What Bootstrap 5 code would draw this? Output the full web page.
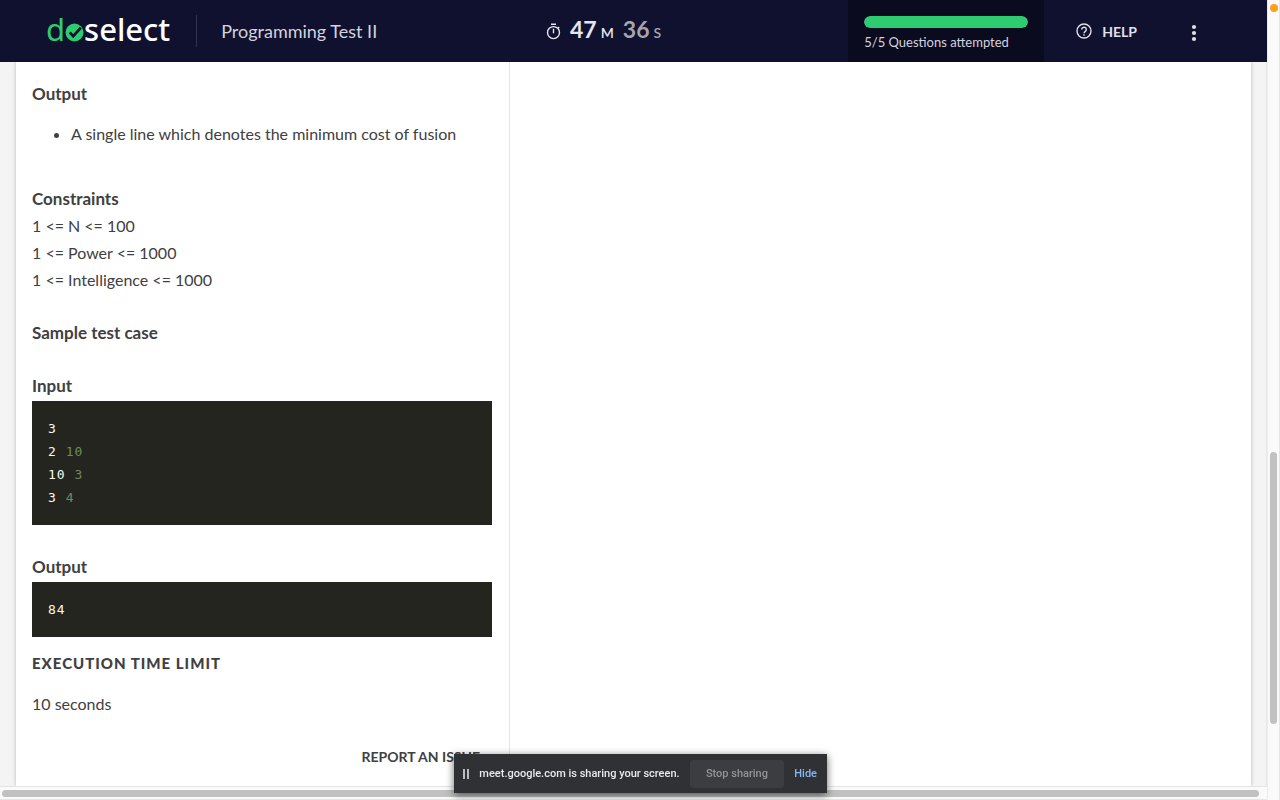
<!DOCTYPE html>
<html lang="en">
<head>
<meta charset="utf-8">
<meta name="viewport" content="width=device-width, initial-scale=1">
<title>Programming Test II</title>
<link href="https://cdn.jsdelivr.net/npm/bootstrap@5.3.0/dist/css/bootstrap.min.css" rel="stylesheet">
<style>
body { font-family: Lato, sans-serif; font-size: 16px; line-height: 27px; color: #404042; background: #fafafa; }
.topbar { background: #10102f; height: 62px; color: #d3d3df; }
.brand { color: #fff; font-family: "Noto Sans", sans-serif; font-size: 31px; line-height: 32px; font-weight: 500; margin: 0 0 4px 46px; }
.brand-d { color: #2ecc71; font-weight: 400; }
.brand-o { width: 19px; height: 19px; margin-top: 7px; }
.divider { width: 1px; height: 32px; background: #31314d; margin: 0 24px 0 26px; }
.test-name { font-size: 18px; }
.side-start { flex: 547 1 0; min-width: 0; }
.side-end { flex: 607 1 0; min-width: 0; }
.timer { color: #e6e6ee; gap: 9px; }
.timer-value { gap: 4px; }
.timer-min, .timer-sec { font-size: 23px; font-weight: 700; }
.timer-unit { font-size: 14px; font-weight: 600; }
.timer-sec, .timer-dim { color: #a5a5ac; }
.attempts { width: 196px; background: #0b0b20; padding: 16px 16px 0; font-size: 13px; line-height: 18px; }
.attempts .progress { height: 12px; border-radius: 6px; background: #26264a; margin-bottom: 5px; }
.attempts .progress-bar { background: #2ecc71; border-radius: 6px; }
.bar-btn { border: 0; padding: 0; background: none; color: #e0e0e9; font-size: 14px; font-weight: 700; }
.help-btn { gap: 10px; margin-left: 32px; }
.more-btn { margin: 0 70px 0 54px; }
.viewport-area { background: #f4f4f4; padding: 0 15px 0 16px; border-right: 1px solid #e8e8e8; border-bottom: 1px solid #e4e4e4; }
.sheet { background: #fff; box-shadow: 0 0 4px rgba(0,0,0,.25); }
.problem { width: 40%; border-right: 1px solid #e6e6e6; padding: 18px 17px 0 16px; }
.problem h2 { font-size: 17px; line-height: 27px; font-weight: 700; margin: 0; }
.problem ul { margin: 13px 0 38px; padding-left: 39px; }
.problem .spaced { margin-top: 26px; }
.problem .sample + .spaced { margin-top: 28px; }
.sample { background: #24251f; color: #f8f8f2; font-family: "DejaVu Sans Mono", monospace; font-size: 13px; line-height: 23px; letter-spacing: 1px; padding: 16px; margin: 2px 0 0; }
.sample span { color: #6e8a5e; }
.problem .limit { font-size: 15px; font-weight: 900; letter-spacing: 1px; margin: 13px 0; }
.report { border: 0; padding: 0; background: none; font-size: 14px; line-height: 27px; font-weight: 700; color: #404042; margin: 26px 12px 0 0; }
.vscroll { width: 13px; border-left: 1px solid #ececec; border-right: 1px solid #e6e6e6; padding: 4px 2px 0; }
.rec-dot { width: 8px; height: 8px; background: #ff9f1c; }
.vthumb, .hthumb { background: #c1c1c1; border-radius: 4px; }
.vthumb { width: 7px; flex: 272 1 0; }
.vgap-top { flex: 448 1 0; }
.vgap-end { flex: 76 1 0; }
.hscroll { height: 13px; padding: 3px 8px 2px 2px; border-bottom: 1px solid #e6e6e6; }
.share { left: 50%; bottom: 7px; margin-left: -186px; width: 373px; height: 39px; background: #303134; color: #e8eaed; box-shadow: 0 2px 8px rgba(0,0,0,.6); font-family: Roboto, sans-serif; font-size: 11px; font-weight: 500; line-height: 16px; padding: 0 10px 0 9px; }
.stop-btn { width: 94px; height: 28px; border: 0; border-radius: 3px; background: #3c3d40; color: #929498; padding: 0; font-weight: 500; }
.share a { color: #8ab4f8; }
</style>
</head>
<body class="vh-100 overflow-hidden d-flex">
<div class="d-flex flex-column flex-grow-1 h-100">
  <header class="topbar d-flex flex-shrink-0">
    <div class="side-start d-flex align-items-center">
      <a href="#" class="brand d-flex align-items-center text-decoration-none" aria-label="doselect"><span class="brand-d">d</span><svg class="brand-o" viewBox="0 0 18 18" aria-hidden="true"><circle cx="9" cy="9" r="8.5" fill="#2ecc71"/><path d="M4.5 8.8l3.3 3.7L15 4.5" fill="none" stroke="#10102f" stroke-width="2.6"/></svg><span>select</span></a>
      <div class="divider"></div>
      <span class="test-name text-nowrap">Programming Test II</span>
    </div>
    <div class="timer d-flex align-items-center" role="timer">
      <svg width="15" height="17" viewBox="0 0 15 17" fill="none" stroke="currentColor" stroke-width="1.4" aria-hidden="true"><circle cx="7.5" cy="9.6" r="6"/><path d="M5 1.2h5M7.500 5.800v4.500M12 4l1.200 1.200"/></svg>
      <span class="timer-value d-flex align-items-baseline"><span class="timer-min">47</span><span class="timer-unit">M</span></span>
      <span class="timer-value d-flex align-items-baseline"><span class="timer-sec">36</span><span class="timer-unit timer-dim">S</span></span>
    </div>
    <div class="side-end d-flex justify-content-end">
      <div class="attempts">
        <div class="progress" role="progressbar" aria-label="Questions attempted" aria-valuenow="5" aria-valuemin="0" aria-valuemax="5"><div class="progress-bar w-100"></div></div>
        <div class="text-nowrap">5/5 Questions attempted</div>
      </div>
      <button type="button" class="bar-btn help-btn d-flex align-items-center"><svg width="16" height="16" viewBox="0 0 16 16" fill="none" stroke="currentColor" stroke-width="1.4" aria-hidden="true"><circle cx="8" cy="8" r="7"/><path d="M5.7 6.5a2.3 2.3 0 1 1 3.6 1.9C8.4 9 8 9.3 8 10.3"/><path d="M8 11.3v1.4"/></svg><span>HELP</span></button>
      <button type="button" class="bar-btn more-btn" aria-label="More options"><svg width="6" height="18" viewBox="0 0 6 18" fill="currentColor" aria-hidden="true"><circle cx="3" cy="3" r="2.1"/><circle cx="3" cy="9" r="2.1"/><circle cx="3" cy="15" r="2.1"/></svg></button>
    </div>
  </header>
  <main class="viewport-area flex-grow-1 overflow-hidden d-flex">
    <div class="sheet d-flex flex-grow-1">
      <section class="problem d-flex flex-column">
        <h2>Output</h2>
        <ul><li>A single line which denotes the minimum cost of fusion</li></ul>
        <h2>Constraints</h2>
        <div>1 &lt;= N &lt;= 100</div>
        <div>1 &lt;= Power &lt;= 1000</div>
        <div>1 &lt;= Intelligence &lt;= 1000</div>
        <h2 class="spaced">Sample test case</h2>
        <h2 class="spaced">Input</h2>
        <pre class="sample">3
2 <span>10</span>
10 <span>3</span>
3 <span>4</span></pre>
        <h2 class="spaced">Output</h2>
        <pre class="sample">84</pre>
        <h2 class="limit">EXECUTION TIME LIMIT</h2>
        <p class="mb-0">10 seconds</p>
        <button type="button" class="report align-self-end">REPORT AN ISSUE</button>
      </section>
    </div>
  </main>
  <div class="hscroll flex-shrink-0"><div class="hthumb h-100"></div></div>
</div>
<div class="vscroll d-flex flex-column flex-shrink-0 h-100">
  <div class="vgap-top"><div class="rec-dot rounded-circle"></div></div>
  <div class="vthumb"></div>
  <div class="vgap-end"></div>
</div>
<div class="share position-fixed d-flex align-items-center justify-content-between">
  <svg width="6" height="10" viewBox="0 0 6 10" aria-hidden="true"><path d="M1 0v10M5 0v10" stroke="#e8eaed" stroke-width="1.5"/></svg>
  <span class="text-nowrap">meet.google.com is sharing your screen.</span>
  <button type="button" class="stop-btn">Stop sharing</button>
  <a href="#" class="text-decoration-none">Hide</a>
</div>
<script src="https://cdn.jsdelivr.net/npm/bootstrap@5.3.0/dist/js/bootstrap.bundle.min.js"></script>
</body>
</html>
